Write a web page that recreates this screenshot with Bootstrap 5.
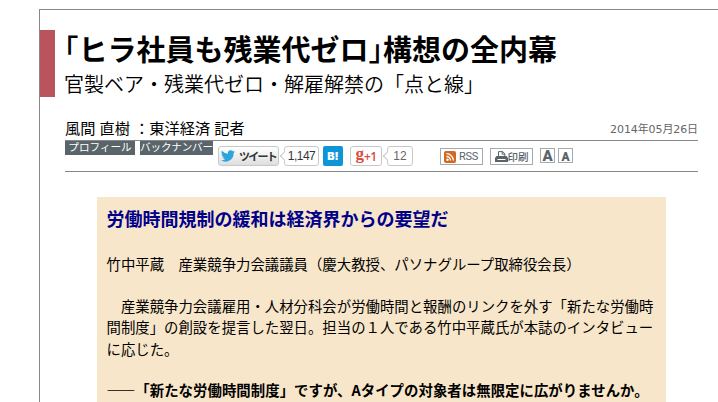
<!DOCTYPE html>
<html lang="ja">
<head>
  <meta charset="UTF-8">
  <meta name="viewport" content="width=device-width, initial-scale=1.0">
  <title>「ヒラ社員も残業代ゼロ」構想の全内幕</title>
  <link rel="stylesheet" href="https://cdn.jsdelivr.net/npm/bootstrap@5.3.0/dist/css/bootstrap.min.css">
  <style>
    body { font-family: "Noto Sans CJK JP", sans-serif; color: #000; background: #fff; overflow: hidden; }
    .page-frame { margin: 9px 0 0 39px; height: 393px; border-top: 1px solid #888; border-left: 1px solid #888; padding-top: 20px; }
    .headline { height: 67px; border-left: 15px solid #b9545c; padding-left: 9px; }
    .headline h1 { font-size: 29px; line-height: 37px; padding-bottom: 3px; font-weight: 700; color: #000; }
    .halt { font-feature-settings: "halt"; font-weight: 500; }
    .headline p { font-size: 20px; line-height: 28px; font-weight: 350; }
    .article-meta { margin: 21px 20px 0 25px; }
    .byline { height: 23px; border-bottom: 1px solid #888; }
    .author { font-size: 15.2px; line-height: 19px; word-spacing: .8px; }
    .date { font: 11px/24px "DejaVu Sans", "Noto Sans CJK JP", sans-serif; color: #666; letter-spacing: -.1px; }
    .tools { height: 31px; border-bottom: 1px solid #888; }
    .tag { height: 14px; font-size: 10.6px; line-height: 12px; background: #59656b; color: #fff; }
    .tag-profile { width: 70px; }
    .tag-back { width: 73px; margin-left: 5px; letter-spacing: -.2px; }
    .buttons { padding-top: 5px; }
    .share { height: 20px; border: 1px solid #c8c8c8; border-radius: 3px; background: #fff; }
    .tweet { width: 61px; margin-left: 5px; background: linear-gradient(#fff, #dedede); font-size: 11px; letter-spacing: -1.7px; color: #333; }
    .bubble { position: relative; font: 12px "Liberation Sans", sans-serif; color: #333; }
    .bubble::before { content: ""; position: absolute; left: -4px; top: 6px; width: 6px; height: 6px; background: #fff; border: solid #c8c8c8; border-width: 0 0 1px 1px; transform: rotate(45deg); }
    .count-tw { width: 35px; margin-left: 5px; letter-spacing: -.5px; }
    .hatena { width: 20px; height: 20px; margin-left: 4px; border-radius: 2px; background: #0c96d8; color: #fff; font: 900 11px "Inter", sans-serif; }
    .gplus { width: 32px; margin-left: 7px; color: #dc4a38; }
    .gplus-g { font: 700 17px/14px "Liberation Serif", serif; padding-bottom: 4px; }
    .gplus-one { font: 600 12px "Open Sans", sans-serif; letter-spacing: -.5px; }
    .count-gp { width: 26px; margin-left: 5px; color: #666; }
    .tool { height: 17px; margin-top: 2px; border: 1px solid #a4aaad; color: #59656b; font: 11px "Liberation Sans", "Noto Sans CJK JP", sans-serif; }
    .tool-rss { width: 43px; margin-left: 27px; padding: 0 4px 0 3px; font-family: "Roboto", sans-serif; letter-spacing: -.3px; }
    .tool-print { width: 43px; margin-left: 7px; font-size: 10.5px; font-weight: 500; }
    .tool-size { height: 15px; width: 15px; margin-left: 7px; font: 900 15px "Roboto", sans-serif; }
    .tool-size-sm { margin-left: 3px; padding-top: 2px; font-size: 12px; }
    .article-box { margin: 25px 52px 0 57px; width: 569px; height: 205px; padding: 8px 0 0 9.5px; background: #f7e6c9; }
    .article-box h2 { font-size: 18px; line-height: 27px; font-weight: 700; color: #00008b; margin-bottom: 21px; }
    .article-box p { font-size: 14.4px; line-height: 21.6px; margin-bottom: 20px; white-space: nowrap; }
    .article-box .question { letter-spacing: .04px; }
  </style>
</head>
<body>
  <main class="page-frame">
    <header class="headline">
      <h1 class="mb-0 text-nowrap"><span class="halt">「</span>ヒラ社員も残業代ゼロ<span class="halt">」</span>構想の全内幕</h1>
      <p class="mb-0 text-nowrap">官製ベア・残業代ゼロ・解雇解禁の「点と線」</p>
    </header>

    <section class="article-meta">
      <div class="byline d-flex justify-content-between">
        <div class="author text-nowrap">風間 直樹 ：東洋経済 記者</div>
        <div class="date">2014年05月26日</div>
      </div>
      <div class="tools d-flex align-items-start text-nowrap">
        <a class="tag tag-profile text-center text-decoration-none" href="#">プロフィール</a>
        <a class="tag tag-back text-center text-decoration-none" href="#">バックナンバー</a>
        <div class="buttons d-flex align-items-start">
          <div class="share tweet d-flex align-items-center justify-content-center fw-bold">
            <svg class="me-1 flex-shrink-0" width="14" height="12" viewBox="0 0 24 20">
              <path fill="#2ba5dc" d="M24 2.4a10 10 0 0 1-2.8.8A5 5 0 0 0 23.3.6a10 10 0 0 1-3.1 1.2A4.9 4.9 0 0 0 11.8 6.2 14 14 0 0 1 1.7 1a4.9 4.9 0 0 0 1.5 6.6A5 5 0 0 1 1 7a4.9 4.9 0 0 0 3.9 4.8 5 5 0 0 1-2.2.1 4.9 4.9 0 0 0 4.6 3.4A10 10 0 0 1 0 17.4 14 14 0 0 0 21.6 5 10 10 0 0 0 24 2.4z"/>
            </svg>
            <span>ツイート</span>
          </div>
          <div class="share bubble count-tw d-flex align-items-center justify-content-center">1,147</div>
          <div class="hatena d-flex align-items-center justify-content-center">B!</div>
          <div class="share gplus d-flex align-items-center justify-content-center">
            <span class="gplus-g">g</span><span class="gplus-one">+1</span>
          </div>
          <div class="share bubble count-gp d-flex align-items-center justify-content-center">12</div>
          <div class="tool tool-rss d-flex align-items-center justify-content-between">
            <svg width="12" height="12" viewBox="0 0 12 12">
              <rect width="12" height="12" rx="2" fill="#d06a22"/>
              <circle cx="3.5" cy="8.7" r="1.2" fill="#fff"/>
              <path d="M2.5 5.5a4 4 0 0 1 4 4M2.5 2.7a6.8 6.8 0 0 1 6.8 6.8" fill="none" stroke="#fff" stroke-width="1.3"/>
            </svg>
            <span>RSS</span>
          </div>
          <div class="tool tool-print d-flex align-items-center justify-content-center">
            <svg class="flex-shrink-0" width="13" height="12" viewBox="0 0 13 12">
              <path d="M3.5 6V.6h4.200L9.8 2.7V6" fill="#fff" stroke="#59656b"/>
              <path d="M7.2.5v2.700h2.600" fill="none" stroke="#59656b"/>
              <path d="M1.500 5h10L13 7v4H0V7z" fill="#59656b"/>
              <path d="M2.500 8.500h8" stroke="#fff"/>
            </svg>
            <span>印刷</span>
          </div>
          <div class="tool tool-size d-flex align-items-center justify-content-center">A</div>
          <div class="tool tool-size tool-size-sm d-flex align-items-center justify-content-center">A</div>
        </div>
      </div>
    </section>

    <article class="article-box">
      <h2>労働時間規制の緩和は経済界からの要望だ</h2>
      <p>竹中平蔵　産業競争力会議議員（慶大教授、パソナグループ取締役会長）</p>
      <p>　産業競争力会議雇用・人材分科会が労働時間と報酬のリンクを外す「新たな労働時<br>間制度」の創設を提言した翌日。担当の１人である竹中平蔵氏が本誌のインタビュー<br>に応じた。</p>
      <p class="question fw-bold">――「新たな労働時間制度」ですが、Aタイプの対象者は無限定に広がりませんか。</p>
    </article>
  </main>
  <script src="https://cdn.jsdelivr.net/npm/bootstrap@5.3.0/dist/js/bootstrap.bundle.min.js"></script>
</body>
</html>
